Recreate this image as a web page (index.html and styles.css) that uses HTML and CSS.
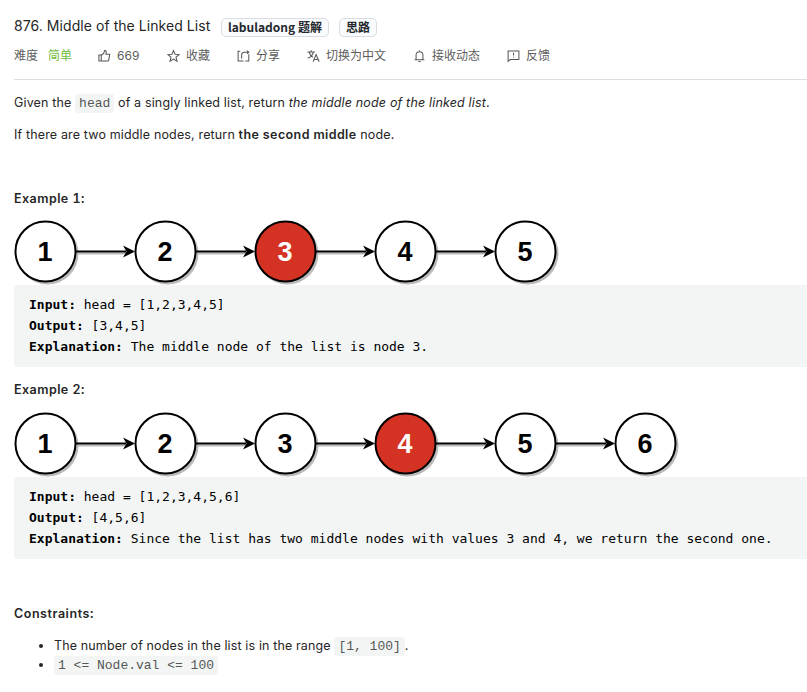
FILE: index.html
```html
<!DOCTYPE html>
<html lang="en">
<head>
<meta charset="utf-8">
<title>Middle of the Linked List</title>
<link rel="stylesheet" href="styles.css">
</head>
<body>
<svg class="defs" aria-hidden="true">
  <defs>
    <g id="arrow"><path class="shade" d="M63 33.5h50"/><path class="line" d="M62 31.5h50"/><path d="M121 31.5 109 25.5l3.500 6-3.500 6z"/></g>
    <g id="ring"><circle class="shadow" cx="33.5" cy="33.5" r="31"/><circle cx="31.5" cy="31.5" r="30"/></g>
  </defs>
</svg>
<header class="header">
  <div class="title-row">
    <h1>876. Middle of the Linked List</h1>
    <span class="tag tag-wide">labuladong 题解</span>
    <span class="tag">思路</span>
  </div>
  <div class="meta">
    <span class="level">难度</span><span class="easy">简单</span>
    <span class="action like"><svg viewBox="0 0 14 14"><path d="M1 6h2.500v6.500H1zM3.500 6.200 6.300 4 7 1.200c2-.3 2.300 1.200 1.500 4h4.100l-1.100 6.500-1 .8h-7"/></svg>669</span>
    <span class="action fav"><svg viewBox="0 0 14 14"><path d="m7 1.200 1.700 3.900 4.200.4-3.200 2.800 1 4.200L7 10.300l-3.700 2.200 1-4.200-3.200-2.800 4.200-.4z"/></svg>收藏</span>
    <span class="action share"><svg viewBox="0 0 14 14"><path d="M3.500 1.800H1.200v10.700h6M9 12.500h3.700V5M5 10V6q0-3 3-3h4.500M10.800 1.200l1.900 1.800-1.900 1.800"/></svg>分享</span>
    <span class="action lang"><svg viewBox="0 0 14 14"><path d="M.5 2.800h8M4.500.8v2M2.300 3q1.400 4 4.200 5.500M6.900 3Q5.500 7.500.8 9.400M6.600 13.200 9.800 5.500l3.300 7.700M7.900 10.700h4"/></svg>切换为中文</span>
    <span class="action bell"><svg viewBox="0 0 14 14"><path d="M1.800 11h10.400M3.300 10.800V6q0-3.600 3.700-3.600T10.700 6v4.800M7 1v1.400M5.800 13h2.400"/></svg>接收动态</span>
    <span class="action feedback"><svg viewBox="0 0 14 14"><path d="M1.200 12.800V1.600h11.600v9.200H3.300zM7 3.500v3M7 7.700v1"/></svg>反馈</span>
  </div>
</header>
<main>
  <p class="intro">Given the <code>head</code> of a singly linked list, return <em>the middle node of the linked list</em>.</p>
  <p class="second">If there are two middle nodes, return <strong>the second middle</strong> node.</p>

  <h2 class="first">Example 1:</h2>
  <svg class="diagram" viewBox="0 0 780 65">
    <use href="#ring"/><use href="#ring" x="120"/><use class="red" href="#ring" x="240"/><use href="#ring" x="360"/><use href="#ring" x="480"/>
    <use href="#arrow"/><use href="#arrow" x="120"/><use href="#arrow" x="240"/><use href="#arrow" x="360"/>
    <text x="31" y="41">1</text><text x="151" y="41">2</text><text class="on" x="271" y="41">3</text><text x="391" y="41">4</text><text x="511" y="41">5</text>
  </svg>
<pre><b>Input:</b> head = [1,2,3,4,5]
<b>Output:</b> [3,4,5]
<b>Explanation:</b> The middle node of the list is node 3.</pre>

  <h2>Example 2:</h2>
  <svg class="diagram" viewBox="0 0 780 65">
    <use href="#ring"/><use href="#ring" x="120"/><use href="#ring" x="240"/><use class="red" href="#ring" x="360"/><use href="#ring" x="480"/><use href="#ring" x="600"/>
    <use href="#arrow"/><use href="#arrow" x="120"/><use href="#arrow" x="240"/><use href="#arrow" x="360"/><use href="#arrow" x="480"/>
    <text x="31" y="41">1</text><text x="151" y="41">2</text><text x="271" y="41">3</text><text class="on" x="391" y="41">4</text><text x="511" y="41">5</text><text x="631" y="41">6</text>
  </svg>
<pre><b>Input:</b> head = [1,2,3,4,5,6]
<b>Output:</b> [4,5,6]
<b>Explanation:</b> Since the list has two middle nodes with values 3 and 4, we return the second one.</pre>

  <h2 class="constraints">Constraints:</h2>
  <ul>
    <li>The number of nodes in the list is in the range <code>[1, 100]</code>.</li>
    <li><code>1 &lt;= Node.val &lt;= 100</code></li>
  </ul>
</main>
</body>
</html>
```
FILE: styles.css
```css
* { box-sizing: border-box; }
body {
  margin: 0;
  padding-left: 14px;
  height: 692px;
  overflow: hidden;
  background: #fff;
  color: #262626;
  font: 12.5px/22px Inter, "Noto Sans CJK SC", sans-serif;
}
.defs { display: block; width: 0; height: 0; }
.header { height: 80px; padding-top: 16px; border-bottom: 1px solid #dedede; }
.title-row { display: flex; height: 22px; }
h1 { margin: -1px 0 0; width: 207px; font-size: 14px; font-weight: 400; line-height: 21px; letter-spacing: .06px; white-space: nowrap; }
.tag {
  height: 19px;
  margin: 2px 10px 0 0;
  padding: 0 6px;
  border: 1px solid #d9dce2;
  border-radius: 5px;
  background: #fafbfc;
  color: #24292e;
  font: 600 12px/16px "Noto Sans CJK SC", sans-serif;
  white-space: nowrap;
}
.tag-wide { width: 108px; }
.meta {
  display: flex;
  height: 20px;
  margin-top: 8px;
  color: #5c5c5c;
  font: 12px/20px Inter, "Noto Sans CJK SC", sans-serif;
  white-space: nowrap;
}
.level { width: 34px; }
.easy { width: 50px; color: #6fbd3c; }
.action { display: flex; align-items: center; gap: 6px; }
.action svg { width: 13px; height: 14px; fill: none; stroke: #555; stroke-width: 1.1; }
.like { width: 69px; }
.fav { width: 70px; }
.share { width: 70px; }
.lang { width: 106px; }
.bell { width: 94px; }

p { margin: 0; height: 20px; letter-spacing: .15px; }
strong { font-weight: 600; letter-spacing: .4px; }
em { letter-spacing: .17px; }
.intro { margin-top: 12px; }
.second { margin-top: 12px; }
code {
  padding: 2px 4px;
  border-radius: 3px;
  background: #f3f5f5;
  color: #555;
  font: 13px/15px "Liberation Mono", monospace;
  letter-spacing: 0;
}
h2 { margin: 12px 0 13px; height: 20px; font-size: 12.5px; font-weight: 600; line-height: 22px; letter-spacing: .45px; font-variant-numeric: tabular-nums; }
h2.first { margin: 44px 0 12px; }
.diagram { display: block; width: 780px; height: 65px; }
.shadow { fill: #bbb; stroke: none; }
use { fill: #fff; stroke: #000; stroke-width: 2; }
use[href="#arrow"] { fill: #000; stroke: none; }
use.red { fill: #d43222; }
.line { stroke: #000; stroke-width: 2; }
.shade { stroke: #bbb; stroke-width: 2; }
text { font: 700 27px "Liberation Sans", sans-serif; text-anchor: middle; }
text.on { fill: #fff; }
pre {
  margin: 0;
  height: 82px;
  padding: 9px 15px;
  border-radius: 3px 0 0 3px;
  background: #f3f5f5;
  color: #000;
  font: 13px/21px "DejaVu Sans Mono", monospace;
}
h2.constraints { margin: 44px 0 12px; letter-spacing: .55px; }
ul { margin: 0; padding-left: 40px; letter-spacing: .13px; }
li { height: 19px; line-height: 22px; }
```
